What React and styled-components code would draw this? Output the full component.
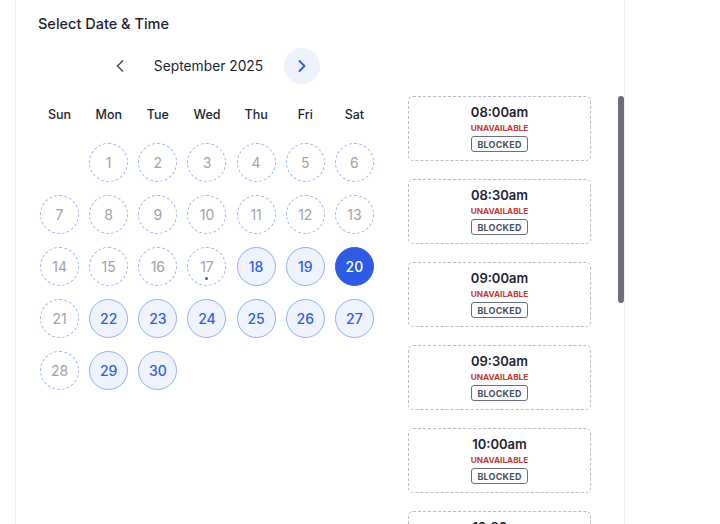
import React from 'react';
import styled, { createGlobalStyle } from 'styled-components';
import { ChevronLeft, ChevronRight } from 'lucide-react';

const GlobalStyle = createGlobalStyle`
    html, body {
        margin: 0;
        padding: 0;
        background: #ffffff;
        font-family: Inter, 'Noto Sans', sans-serif;
        overflow: hidden;
    }
`

const WEEKDAYS = ['Sun', 'Mon', 'Tue', 'Wed', 'Thu', 'Fri', 'Sat'];
const AVAILABLE = [18, 19, 22, 23, 24, 25, 26, 27, 29, 30];
const SELECTED = 20;
const TODAY = 17;
const FIRST_WEEKDAY = 1;
const DAYS_IN_MONTH = 30;

const SLOTS = [
    '08:00am', '08:30am', '09:00am', '09:30am', '10:00am', '10:30am',
    '11:00am', '11:30am', '12:00pm', '12:30pm', '01:00pm',
];

const LIST_HEIGHT = 430;
const SLOT_HEIGHT = 65;
const SLOT_GAP = 18;

const getState = (day) => {
    if (day === SELECTED) return 'selected';
    if (AVAILABLE.includes(day)) return 'available';
    return 'disabled';
};

const App = () => {
    const blanks = Array.from({ length: FIRST_WEEKDAY });
    const days = Array.from({ length: DAYS_IN_MONTH }, (_, i) => i + 1);
    const contentHeight = SLOTS.length * SLOT_HEIGHT + (SLOTS.length - 1) * SLOT_GAP;
    const thumbHeight = Math.round((LIST_HEIGHT * LIST_HEIGHT) / contentHeight);

    return (
        <>
            <GlobalStyle />
            <Card>
                <Title>Select Date &amp; Time</Title>
                <Content>
                    <CalendarColumn>
                        <MonthNav>
                            <NavButton aria-label="Previous month">
                                <ChevronLeft size={20} strokeWidth={2} />
                            </NavButton>
                            <MonthLabel>September 2025</MonthLabel>
                            <NavButton $active aria-label="Next month">
                                <ChevronRight size={20} strokeWidth={2.2} />
                            </NavButton>
                        </MonthNav>
                        <WeekRow>
                            {WEEKDAYS.map((d) => <WeekDay key={d}>{d}</WeekDay>)}
                        </WeekRow>
                        <DayGrid>
                            {blanks.map((_, i) => <span key={`b${i}`} />)}
                            {days.map((day) => (
                                <DayCell key={day}>
                                    <DayButton $state={getState(day)}>
                                        {day}
                                        {day === TODAY && <TodayDot />}
                                    </DayButton>
                                </DayCell>
                            ))}
                        </DayGrid>
                    </CalendarColumn>
                    <ScrollArea>
                        <SlotList>
                            {SLOTS.map((time) => (
                                <Slot key={time}>
                                    <SlotTime>{time}</SlotTime>
                                    <SlotStatus>UNAVAILABLE</SlotStatus>
                                    <Badge>BLOCKED</Badge>
                                </Slot>
                            ))}
                        </SlotList>
                        <ScrollTrack>
                            <ScrollThumb style={{ height: thumbHeight }} />
                        </ScrollTrack>
                    </ScrollArea>
                </Content>
            </Card>
        </>
    )
};

export default App;

const Card = styled.div`
    margin-left: 15px;
    width: 608px;
    height: 524px;
    border-left: 1px solid #ececef;
    border-right: 1px solid #ececef;
    background: #ffffff;
    overflow: hidden;
`

const Title = styled.h2`
    margin: 0;
    padding: 14px 0 0 22px;
    font-size: 14.5px;
    line-height: 19px;
    font-weight: 500;
    color: #1f2433;
`

const Content = styled.div`
    display: flex;
    padding-top: 15px;
    padding-left: 19px;
`

const CalendarColumn = styled.div`
    width: 344px;
    display: flex;
    flex-direction: column;
`

const MonthNav = styled.div`
    display: flex;
    align-items: center;
    justify-content: center;
    height: 36px;
    padding-left: 8px;
`

const NavButton = styled.button`
    width: 36px;
    height: 36px;
    border: none;
    border-radius: 50%;
    padding: 0;
    display: flex;
    align-items: center;
    justify-content: center;
    cursor: pointer;
    background: ${(p) => (p.$active ? '#eef2fd' : 'transparent')};
    color: ${(p) => (p.$active ? '#2f5fe0' : '#4b5263')};
`

const MonthLabel = styled.span`
    margin: 0 21px 0 16px;
    font-size: 13.8px;
    color: #1f2433;
`

const WeekRow = styled.div`
    display: grid;
    grid-template-columns: repeat(7, 1fr);
    margin-top: 20px;
    height: 20px;
    align-items: center;
`

const WeekDay = styled.span`
    text-align: center;
    font-size: 12.5px;
    font-weight: 500;
    color: #1f2433;
`

const DayGrid = styled.div`
    display: grid;
    grid-template-columns: repeat(7, 1fr);
    row-gap: 13px;
    margin-top: 19px;
`

const DayCell = styled.div`
    display: flex;
    justify-content: center;
`

const dayStyles = {
    disabled: `
        border: 1px dashed #9db7f5;
        background: transparent;
        color: #a0a4ab;
        font-weight: 400;
    `,
    available: `
        border: 1.5px solid #94aff2;
        background: #eef3fe;
        color: #2f5fe0;
        font-weight: 500;
    `,
    selected: `
        border: 1.5px solid #2d5be3;
        background: #2d5be3;
        color: #ffffff;
        font-weight: 500;
    `,
};

const DayButton = styled.button`
    position: relative;
    width: 39px;
    height: 39px;
    border-radius: 50%;
    box-sizing: border-box;
    padding: 0;
    display: flex;
    align-items: center;
    justify-content: center;
    font-family: Inter, 'Noto Sans', sans-serif;
    font-size: 14px;
    cursor: pointer;
    ${(p) => dayStyles[p.$state]}
`

const TodayDot = styled.span`
    position: absolute;
    bottom: 5px;
    left: 50%;
    width: 3px;
    height: 3px;
    margin-left: -1.5px;
    border-radius: 50%;
    background: #2f5fe0;
`

const ScrollArea = styled.div`
    flex: 1;
    display: flex;
    margin-top: 48px;
    margin-left: 29px;
    height: ${LIST_HEIGHT}px;
`

const SlotList = styled.div`
    flex: 1;
    overflow: hidden;
    display: flex;
    flex-direction: column;
    gap: ${SLOT_GAP}px;
`

const ScrollTrack = styled.div`
    width: 6px;
    flex: 0 0 6px;
`

const ScrollThumb = styled.div`
    width: 100%;
    background: #6c6f78;
    border-radius: 3px;
`

const Slot = styled.div`
    flex: 0 0 auto;
    width: 183px;
    height: ${SLOT_HEIGHT}px;
    box-sizing: border-box;
    border: 1px dashed #b9bdc7;
    border-radius: 5px;
    display: flex;
    flex-direction: column;
    align-items: center;
    padding-top: 6px;
`

const SlotTime = styled.div`
    font-size: 13px;
    line-height: 18px;
    font-weight: 600;
    color: #1f2433;
`

const SlotStatus = styled.div`
    margin-top: 2px;
    font-size: 8.2px;
    line-height: 11px;
    font-weight: 700;
    color: #c13b34;
`

const Badge = styled.div`
    margin-top: 2px;
    height: 16px;
    box-sizing: border-box;
    padding: 0 5px;
    display: flex;
    align-items: center;
    border: 1px solid #6b7080;
    border-radius: 3px;
    font-size: 9px;
    font-weight: 700;
    color: #4b5263;
    letter-spacing: 0.2px;
`
